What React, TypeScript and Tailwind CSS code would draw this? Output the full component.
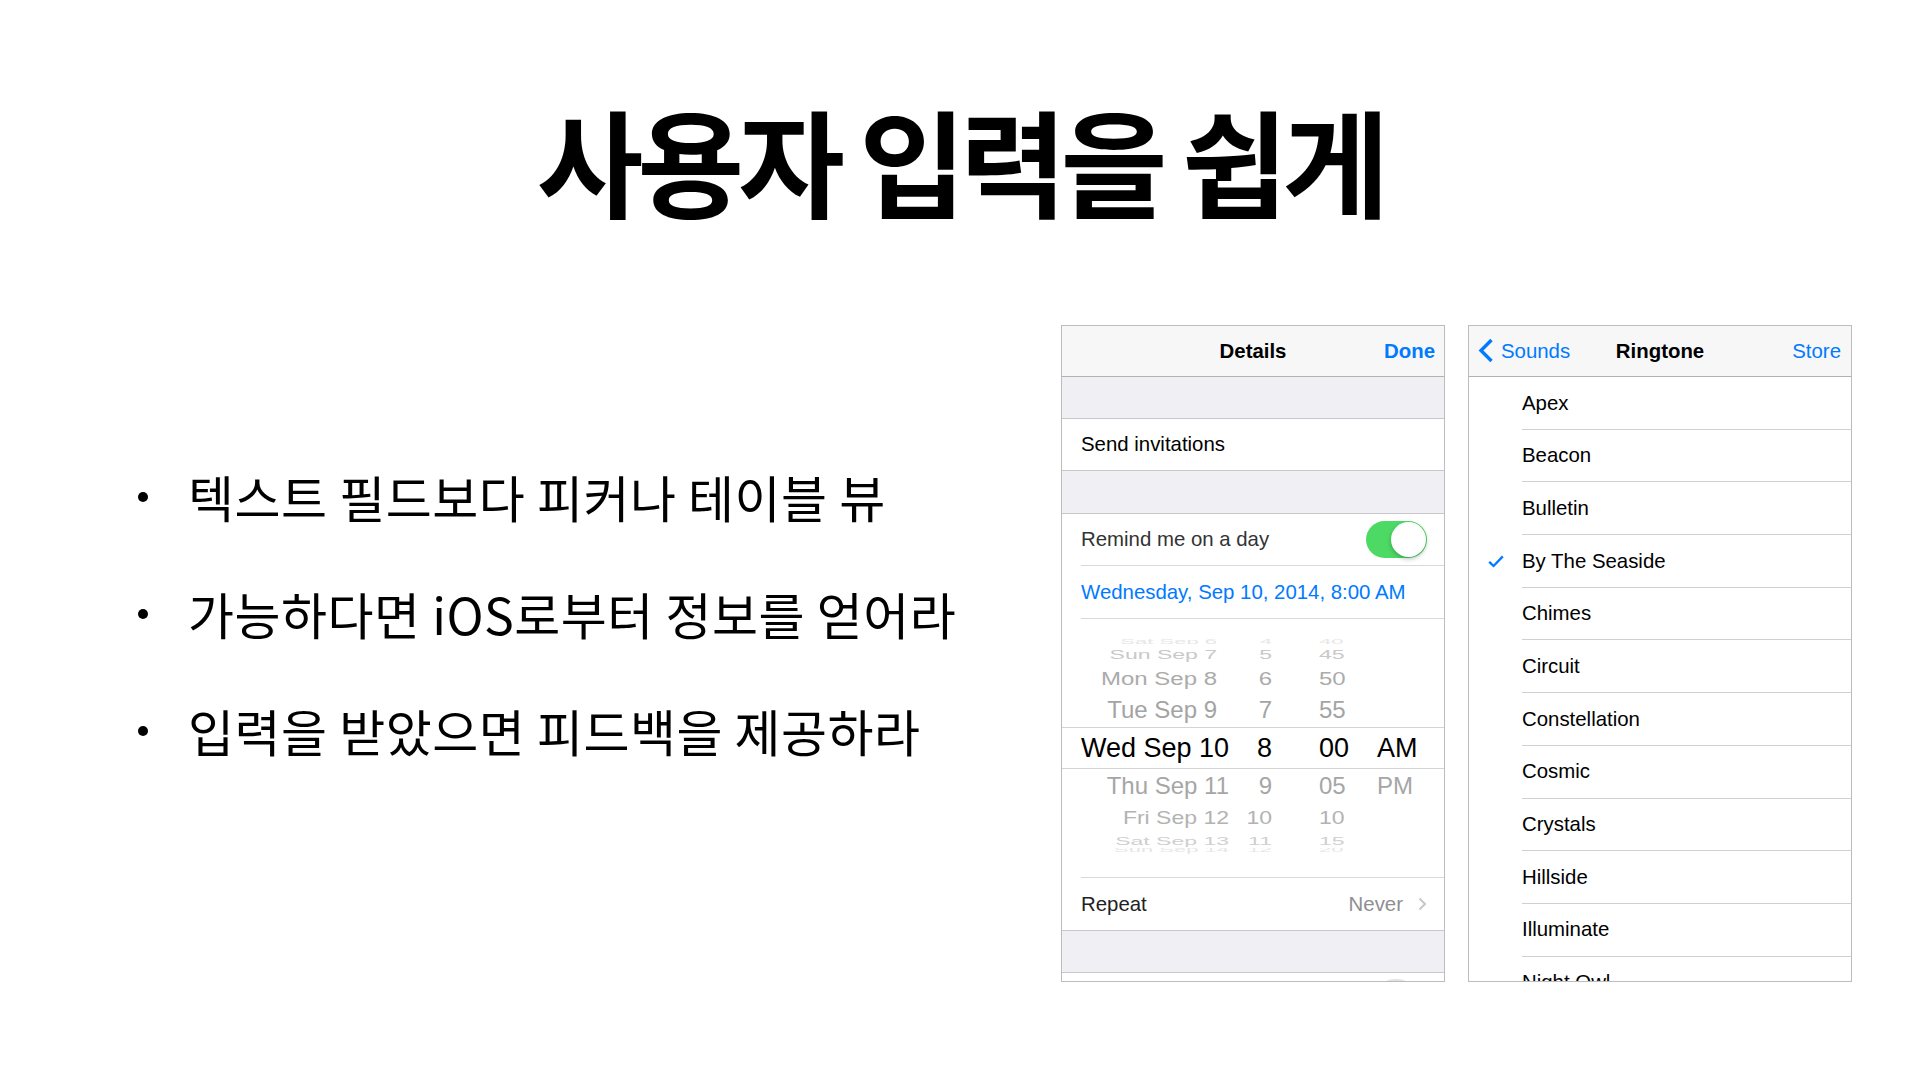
import React from "react";

const blue = "text-[#007aff]";

const ringtones = [
  "Apex", "Beacon", "Bulletin", "By The Seaside", "Chimes", "Circuit",
  "Constellation", "Cosmic", "Crystals", "Hillside", "Illuminate", "Night Owl",
];

function Chevron({ className }: { className?: string }) {
  return (
    <svg width="9" height="14" viewBox="0 0 9 14" className={className}>
      <path d="M1.5 1.5 L7 7 L1.5 12.5" fill="none" stroke="#c7c7cc" strokeWidth="2" />
    </svg>
  );
}

interface RowProps {
  h: string;
  text: string;
  dateW: string;
  hourW: string;
  date: string;
  hour: string;
  min: string;
  ampm?: string;
  extra?: string;
}

function PickerRow({ h, text, dateW, hourW, date, hour, min, ampm, extra = "" }: RowProps) {
  return (
    <div className={`flex items-center overflow-hidden ${h} ${extra}`}>
      <div className={`flex items-center whitespace-nowrap ${text}`}>
        <span className={`${dateW} text-right`}>{date}</span>
        <span className={`${hourW} text-right`}>{hour}</span>
        <span className="ml-[47px] w-[58px]">{min}</span>
        <span>{ampm}</span>
      </div>
    </div>
  );
}

function DetailsPanel() {
  return (
    <div className="w-[384px] h-[657px] border border-[#bcbcbc] overflow-hidden bg-white flex flex-col font-['Liberation_Sans',Arial,sans-serif] text-[20.4px]">
      {/* nav */}
      <div className="h-[51px] shrink-0 bg-[#f7f7f7] border-b border-[#b2b2b2] grid grid-cols-[1fr_auto_1fr] items-center">
        <div />
        <div className="font-bold text-black">Details</div>
        <div className={`text-right pr-[9px] font-bold ${blue}`}>Done</div>
      </div>
      <div className="h-[41px] shrink-0 bg-[#efeff4]" />
      <div className="h-[53px] shrink-0 border-y border-[#c8c7cc] flex items-center pl-[19px] text-black">
        Send invitations
      </div>
      <div className="h-[42px] shrink-0 bg-[#efeff4]" />
      <div className="h-[53px] shrink-0 border-t border-[#c8c7cc] pl-[19px]">
        <div className="h-full border-b border-[#d9d9dd] flex items-center justify-between pr-[17px] text-[#333]">
          <span>Remind me on a day</span>
          <div className="w-[61px] h-[37px] rounded-full bg-[#4cd964] p-[1px] flex justify-end">
            <div className="w-[35px] h-[35px] rounded-full bg-white shadow-[0_2px_4px_rgba(0,0,0,0.25)]" />
          </div>
        </div>
      </div>
      <div className="h-[53px] shrink-0 pl-[19px]">
        <div className={`h-full border-b border-[#d9d9dd] flex items-center ${blue}`}>
          Wednesday, Sep 10, 2014, 8:00 AM
        </div>
      </div>
      {/* picker wheel */}
      <div className="h-[258px] shrink-0 flex flex-col">
        <div className="h-[17px] shrink-0" />
        <PickerRow h="h-[8px] shrink-0 items-end" text="text-[22px] leading-[22px] text-[#e6e6e6] scale-y-[0.3] translate-y-[9px]" dateW="w-[155px]" hourW="w-[55px]" date="Sat Sep 6" hour="4" min="40" />
        <PickerRow h="h-[22px] shrink-0" text="text-[23px] leading-[22px] text-[#c9c9c9] scale-y-[0.55]" dateW="w-[155px]" hourW="w-[55px]" date="Sun Sep 7" hour="5" min="45" />
        <PickerRow h="h-[26px] shrink-0" text="text-[24px] leading-[24px] text-[#ababab] scale-y-[0.78]" dateW="w-[155px]" hourW="w-[55px]" date="Mon Sep 8" hour="6" min="50" />
        <PickerRow h="h-[35px] shrink-0" text="text-[24px] leading-[24px] text-[#a4a4a4]" dateW="w-[155px]" hourW="w-[55px]" date="Tue Sep 9" hour="7" min="55" />
        <PickerRow h="h-[42px] shrink-0" extra="border-y border-[#d4d4d4]" text="text-[27px] leading-[27px] text-black" dateW="w-[167px]" hourW="w-[43px]" date="Wed Sep 10" hour="8" min="00" ampm="AM" />
        <PickerRow h="h-[33px] shrink-0" text="text-[24px] leading-[24px] text-[#a6a6a6]" dateW="w-[167px]" hourW="w-[43px]" date="Thu Sep 11" hour="9" min="05" ampm="PM" />
        <PickerRow h="h-[32px] shrink-0" text="text-[23px] leading-[23px] text-[#b3b3b3] scale-y-[0.8]" dateW="w-[167px]" hourW="w-[43px]" date="Fri Sep 12" hour="10" min="10" />
        <PickerRow h="h-[14px] shrink-0" text="text-[23px] leading-[23px] text-[#cfcfcf] scale-y-[0.5]" dateW="w-[167px]" hourW="w-[43px]" date="Sat Sep 13" hour="11" min="15" />
        <PickerRow h="h-[8px] shrink-0 items-start" text="text-[22px] leading-[22px] text-[#e6e6e6] scale-y-[0.3] -translate-y-[9px]" dateW="w-[167px]" hourW="w-[43px]" date="Sun Sep 14" hour="12" min="20" />
      </div>
      <div className="h-[54px] shrink-0 pl-[19px] border-b border-[#c8c7cc]">
        <div className="h-full border-t border-[#d9d9dd] flex items-center justify-between pr-[17px]">
          <span className="text-[#222]">Repeat</span>
          <div className="flex items-center gap-[15px]">
            <span className="text-[#8e8e93]">Never</span>
            <Chevron />
          </div>
        </div>
      </div>
      <div className="h-[41px] shrink-0 bg-[#efeff4]" />
      <div className="flex-1 border-t border-[#c8c7cc] flex justify-end pr-[28px] overflow-hidden">
        <div className="mt-[6px] w-[40px] h-[37px] rounded-full border-[2px] border-[#e3e3e3] shrink-0" />
      </div>
    </div>
  );
}

function RingtonePanel() {
  return (
    <div className="w-[384px] h-[657px] border border-[#bcbcbc] overflow-hidden bg-white flex flex-col font-['Liberation_Sans',Arial,sans-serif] text-[20.4px]">
      <div className="h-[51px] shrink-0 bg-[#f7f7f7] border-b border-[#b2b2b2] grid grid-cols-[1fr_auto_1fr] items-center">
        <div className={`flex items-center pl-[9px] gap-[7px] ${blue}`}>
          <svg width="16" height="25" viewBox="0 0 16 25">
            <path d="M13.5 2 L3 12.5 L13.5 23" fill="none" stroke="#007aff" strokeWidth="3.4" />
          </svg>
          <span>Sounds</span>
        </div>
        <div className="font-bold text-black">Ringtone</div>
        <div className={`text-right pr-[10px] ${blue}`}>Store</div>
      </div>
      {ringtones.map((name) => (
        <div key={name} className="h-[52.7px] shrink-0 flex">
          <div className="w-[53px] shrink-0 flex items-center pl-[19px]">
            {name === "By The Seaside" && (
              <svg width="16" height="13" viewBox="0 0 16 13">
                <path d="M1.2 6.8 L5.6 11 L14.8 1.4" fill="none" stroke="#007aff" strokeWidth="2.3" />
              </svg>
            )}
          </div>
          <div className="flex-1 border-b border-[#d0d0d4] flex items-center text-black">{name}</div>
        </div>
      ))}
    </div>
  );
}

export default function App() {
  const bullets = [
    "텍스트 필드보다 피커나 테이블 뷰",
    "가능하다면 iOS로부터 정보를 얻어라",
    "입력을 받았으면 피드백을 제공하라",
  ];
  return (
    <div className="w-[1920px] h-[1080px] bg-white overflow-hidden flex flex-col">
      <h1 className="h-[325px] shrink-0 pt-[100px] text-center font-bold text-[116px] leading-none tracking-[-6px] text-black font-['Noto_Sans_CJK_KR',sans-serif]">
        사용자 입력을 쉽게
      </h1>
      <div className="flex items-start">
        <ul className="pl-[138px] mt-[113px] flex flex-col font-['Noto_Sans_CJK_KR',sans-serif] text-[50px] tracking-[0.5px] text-black">
          {bullets.map((b) => (
            <li key={b} className="h-[117px] flex items-center whitespace-nowrap">
              <span className="w-[10px] h-[10px] rounded-full bg-black mr-[40px] shrink-0" />
              <span>{b}</span>
            </li>
          ))}
        </ul>
        <div className="ml-auto mr-[68px] flex gap-[23px]">
          <DetailsPanel />
          <RingtonePanel />
        </div>
      </div>
    </div>
  );
}
